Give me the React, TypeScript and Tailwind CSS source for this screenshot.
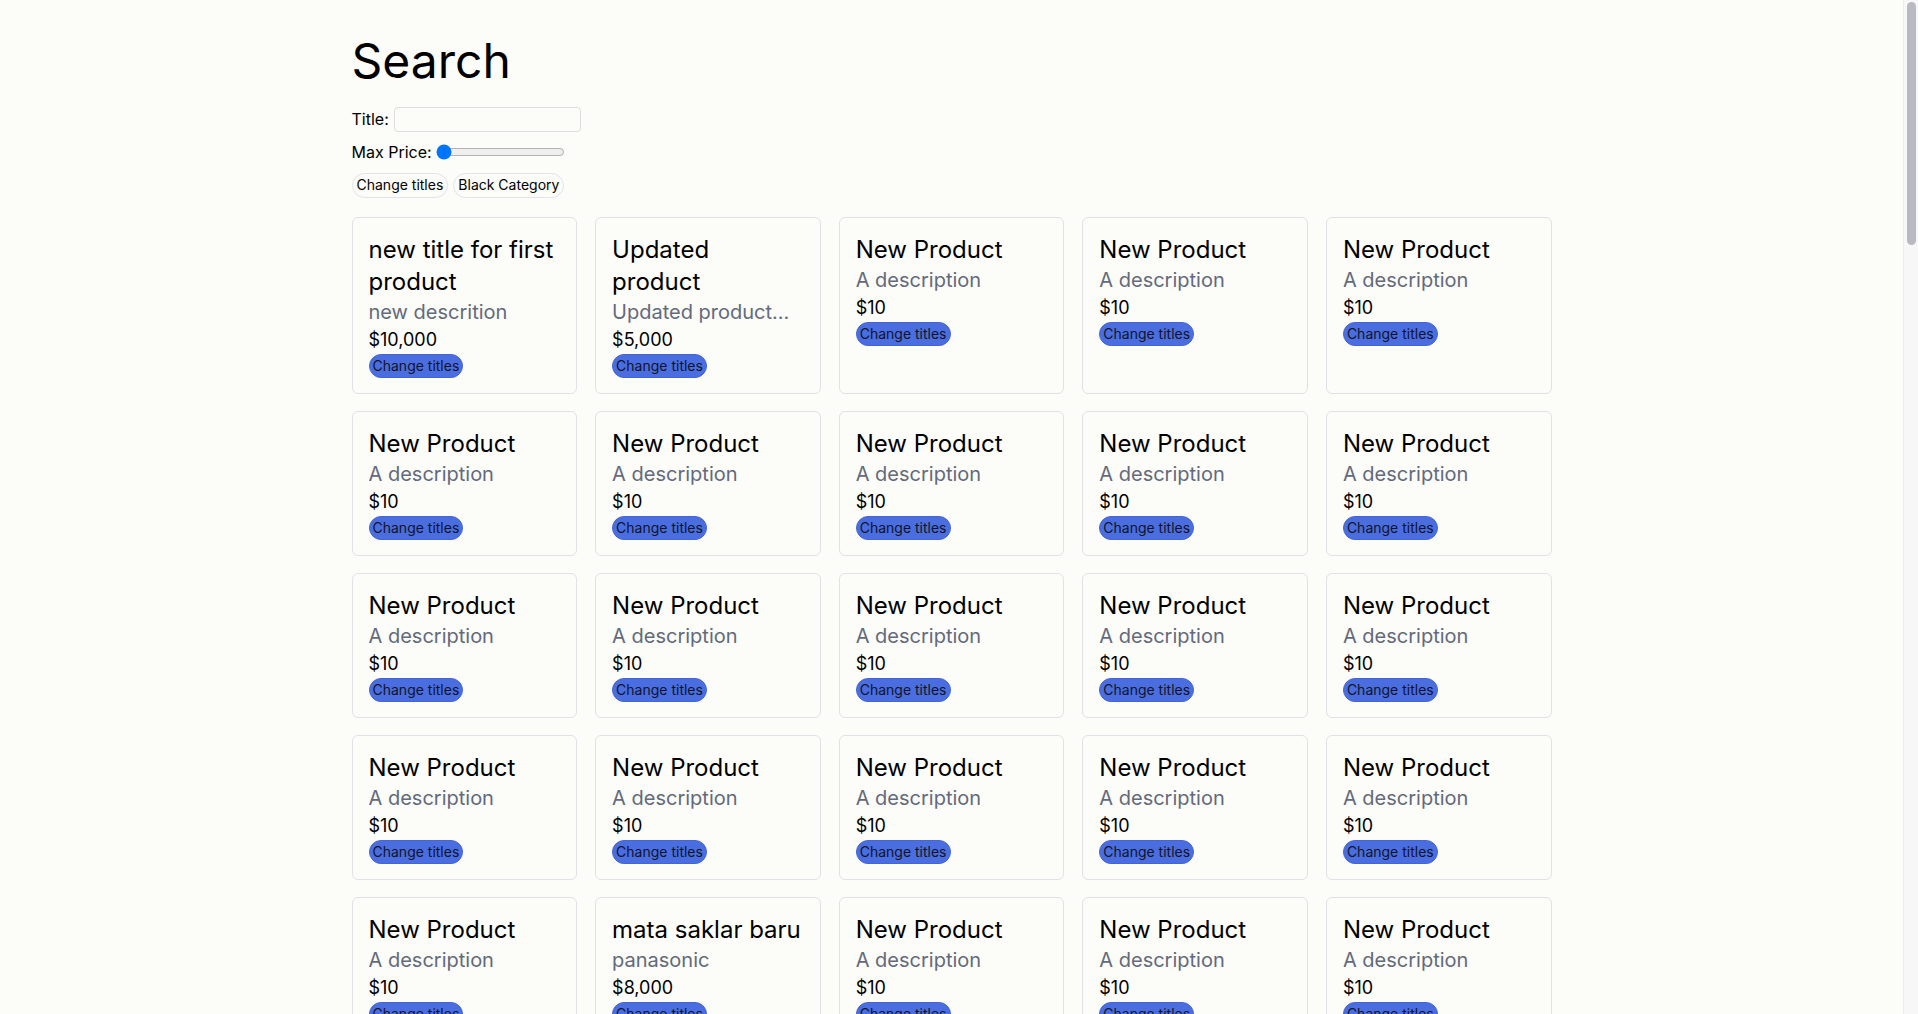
import React, { useState } from 'react'

interface Product {
    id: number
    title: string
    description: string
    price: number
}

const makeProducts = (): Product[] => {
    const list: Product[] = []
    for (let i = 0; i < 30; i++) {
        list.push({ id: i + 1, title: 'New Product', description: 'A description', price: 10 })
    }
    list[0] = { id: 1, title: 'new title for first product', description: 'new descrition', price: 10000 }
    list[1] = { id: 2, title: 'Updated product', description: 'Updated product...', price: 5000 }
    list[21] = { id: 22, title: 'mata saklar baru', description: 'panasonic', price: 8000 }
    return list
}

const formatPrice = (value: number) => '$' + value.toLocaleString('en-US')

const ProductCard = ({ product }: { product: Product }) => {
    return (
        <div className="flex flex-col items-start rounded-[6px] border border-[#e2e2e6] px-4 pt-4 pb-[15px]">
            <h3 className="text-2xl leading-8 text-black">{product.title}</h3>
            <p className="w-full truncate text-xl leading-7 text-[#626a7c]">{product.description}</p>
            <p className="text-lg leading-7 text-black">{formatPrice(product.price)}</p>
            <button className="flex h-[24px] items-center rounded-full border border-[#4565d6] bg-[#4a6ee0] px-[3px] text-sm text-[#10142a]">
                Change titles
            </button>
        </div>
    )
}

export default function App() {
    const [title, setTitle] = useState('')
    const [maxPrice, setMaxPrice] = useState(0)
    const products = makeProducts()

    return (
        <div className="min-h-screen bg-[#fcfcf8] pr-[15px] font-[Inter,system-ui,sans-serif] text-black">
            <div className="mx-auto max-w-[1200px] pb-10">
                <h1 className="pt-[35px] text-5xl leading-[1.1]">Search</h1>

                <div className="mt-[19px] flex h-[25px] items-center gap-[5px] text-base">
                    <label>Title:</label>
                    <input
                        value={title}
                        onChange={(e) => setTitle(e.target.value)}
                        className="h-[25px] w-[187px] rounded-[4px] border border-[#dcdcdc] bg-transparent px-1 outline-none"
                    />
                </div>

                <div className="mt-[8px] flex h-[24px] items-center gap-1 text-base">
                    <label>Max Price:</label>
                    <input
                        type="range"
                        min={0}
                        max={10000}
                        value={maxPrice}
                        onChange={(e) => setMaxPrice(Number(e.target.value))}
                        className="w-[129px]"
                    />
                </div>

                <div className="mt-[9px] flex gap-[5px]">
                    <button className="flex h-[25px] items-center rounded-full border border-[#e3e3ee] px-[4px] text-sm">
                        Change titles
                    </button>
                    <button className="flex h-[25px] items-center rounded-full border border-[#e3e3ee] px-[4px] text-sm">
                        Black Category
                    </button>
                </div>

                <div className="mt-[19px] grid grid-cols-5 gap-x-[18px] gap-y-[17px]">
                    {products.map((p) => (
                        <ProductCard key={p.id} product={p} />
                    ))}
                </div>
            </div>

            {/* page scrollbar */}
            <div className="fixed top-0 right-0 h-screen w-[15px] border-l border-[#ececec] bg-[#f7f7f7] pt-[2px] pl-[3px]">
                <div className="h-[243px] w-[9px] rounded-full bg-[#b9b9c1]" />
            </div>
        </div>
    )
}
